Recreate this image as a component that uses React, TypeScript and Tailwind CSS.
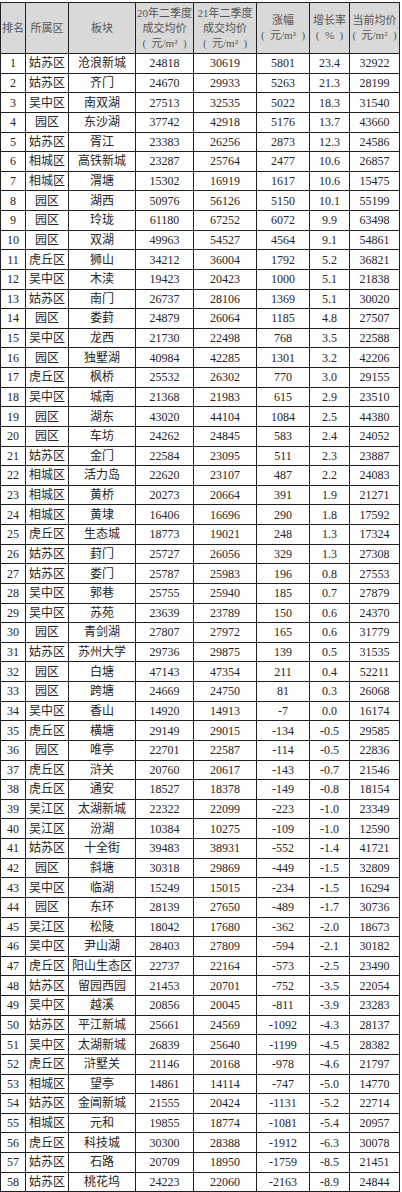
import React from "react";

const rows: [number, string, string, string, string, string, string, string][] = [
  [1, "姑苏区", "沧浪新城", "24818", "30619", "5801", "23.4", "32922"],
  [2, "姑苏区", "齐门", "24670", "29933", "5263", "21.3", "28199"],
  [3, "吴中区", "南双湖", "27513", "32535", "5022", "18.3", "31540"],
  [4, "园区", "东沙湖", "37742", "42918", "5176", "13.7", "43660"],
  [5, "姑苏区", "胥江", "23383", "26256", "2873", "12.3", "24586"],
  [6, "相城区", "高铁新城", "23287", "25764", "2477", "10.6", "26857"],
  [7, "相城区", "渭塘", "15302", "16919", "1617", "10.6", "15475"],
  [8, "园区", "湖西", "50976", "56126", "5150", "10.1", "55199"],
  [9, "园区", "玲珑", "61180", "67252", "6072", "9.9", "63498"],
  [10, "园区", "双湖", "49963", "54527", "4564", "9.1", "54861"],
  [11, "虎丘区", "狮山", "34212", "36004", "1792", "5.2", "36821"],
  [12, "吴中区", "木渎", "19423", "20423", "1000", "5.1", "21838"],
  [13, "姑苏区", "南门", "26737", "28106", "1369", "5.1", "30020"],
  [14, "园区", "娄葑", "24879", "26064", "1185", "4.8", "27507"],
  [15, "吴中区", "龙西", "21730", "22498", "768", "3.5", "22588"],
  [16, "园区", "独墅湖", "40984", "42285", "1301", "3.2", "42206"],
  [17, "虎丘区", "枫桥", "25532", "26302", "770", "3.0", "29155"],
  [18, "吴中区", "城南", "21368", "21983", "615", "2.9", "23510"],
  [19, "园区", "湖东", "43020", "44104", "1084", "2.5", "44380"],
  [20, "园区", "车坊", "24262", "24845", "583", "2.4", "24052"],
  [21, "姑苏区", "金门", "22584", "23095", "511", "2.3", "23887"],
  [22, "相城区", "活力岛", "22620", "23107", "487", "2.2", "24083"],
  [23, "相城区", "黄桥", "20273", "20664", "391", "1.9", "21271"],
  [24, "相城区", "黄埭", "16406", "16696", "290", "1.8", "17592"],
  [25, "虎丘区", "生态城", "18773", "19021", "248", "1.3", "17324"],
  [26, "姑苏区", "葑门", "25727", "26056", "329", "1.3", "27308"],
  [27, "姑苏区", "娄门", "25787", "25983", "196", "0.8", "27553"],
  [28, "吴中区", "郭巷", "25755", "25940", "185", "0.7", "27879"],
  [29, "吴中区", "苏苑", "23639", "23789", "150", "0.6", "24370"],
  [30, "园区", "青剑湖", "27807", "27972", "165", "0.6", "31779"],
  [31, "姑苏区", "苏州大学", "29736", "29875", "139", "0.5", "31535"],
  [32, "园区", "白塘", "47143", "47354", "211", "0.4", "52211"],
  [33, "园区", "跨塘", "24669", "24750", "81", "0.3", "26068"],
  [34, "吴中区", "香山", "14920", "14913", "-7", "0.0", "16174"],
  [35, "虎丘区", "横塘", "29149", "29015", "-134", "-0.5", "29585"],
  [36, "园区", "唯亭", "22701", "22587", "-114", "-0.5", "22836"],
  [37, "虎丘区", "浒关", "20760", "20617", "-143", "-0.7", "21546"],
  [38, "虎丘区", "通安", "18527", "18378", "-149", "-0.8", "18154"],
  [39, "吴江区", "太湖新城", "22322", "22099", "-223", "-1.0", "23349"],
  [40, "吴江区", "汾湖", "10384", "10275", "-109", "-1.0", "12590"],
  [41, "姑苏区", "十全街", "39483", "38931", "-552", "-1.4", "41721"],
  [42, "园区", "斜塘", "30318", "29869", "-449", "-1.5", "32809"],
  [43, "吴中区", "临湖", "15249", "15015", "-234", "-1.5", "16294"],
  [44, "园区", "东环", "28139", "27650", "-489", "-1.7", "30736"],
  [45, "吴江区", "松陵", "18042", "17680", "-362", "-2.0", "18673"],
  [46, "吴中区", "尹山湖", "28403", "27809", "-594", "-2.1", "30182"],
  [47, "虎丘区", "阳山生态区", "22737", "22164", "-573", "-2.5", "23490"],
  [48, "姑苏区", "留园西园", "21453", "20701", "-752", "-3.5", "22054"],
  [49, "吴中区", "越溪", "20856", "20045", "-811", "-3.9", "23283"],
  [50, "姑苏区", "平江新城", "25661", "24569", "-1092", "-4.3", "28137"],
  [51, "吴中区", "太湖新城", "26839", "25640", "-1199", "-4.5", "28382"],
  [52, "虎丘区", "浒墅关", "21146", "20168", "-978", "-4.6", "21797"],
  [53, "相城区", "望亭", "14861", "14114", "-747", "-5.0", "14770"],
  [54, "姑苏区", "金阊新城", "21555", "20424", "-1131", "-5.2", "22714"],
  [55, "相城区", "元和", "19855", "18774", "-1081", "-5.4", "20957"],
  [56, "虎丘区", "科技城", "30300", "28388", "-1912", "-6.3", "30078"],
  [57, "姑苏区", "石路", "20709", "18950", "-1759", "-8.5", "21451"],
  [58, "姑苏区", "桃花坞", "24223", "22060", "-2163", "-8.9", "24844"],
];

const cell =
  "flex items-center justify-center border-r border-b border-[#1f1f1f] overflow-hidden whitespace-nowrap";

const unit = "(\u2002元/m²\u2002)";

const headers: string[][] = [
  ["排名"],
  ["所属区"],
  ["板块"],
  ["20年二季度", "成交均价", unit],
  ["21年二季度", "成交均价", unit],
  ["涨幅", unit],
  ["增长率", "(\u2002%\u2002)"],
  ["当前均价", unit],
];

export default function App() {
  return (
    <div className="w-[402px] h-[1192px] overflow-hidden bg-white pt-[2px]">
      <div
        className="grid grid-cols-[25px_43px_67px_58px_63px_53px_40px_50px] w-[400px] border-l border-t border-[#1f1f1f] text-[#262626]"
        style={{ fontFamily: '"Liberation Serif", "Noto Sans CJK SC", serif' }}
      >
        {headers.map((lines, i) => (
          <div
            key={"h" + i}
            className={`${cell} h-[51px] flex-col bg-[#d9d9d9] text-[11px] leading-[15px] text-[#555]`}
          >
            {lines.map((l, j) => (
              <span key={j} className="whitespace-pre">
                {l}
              </span>
            ))}
          </div>
        ))}
        {rows.map((r) => (
          <React.Fragment key={r[0]}>
            {r.map((v, k) => (
              <div key={k} className={`${cell} h-[19.63px] text-[12px]`}>
                {v}
              </div>
            ))}
          </React.Fragment>
        ))}
      </div>
    </div>
  );
}
